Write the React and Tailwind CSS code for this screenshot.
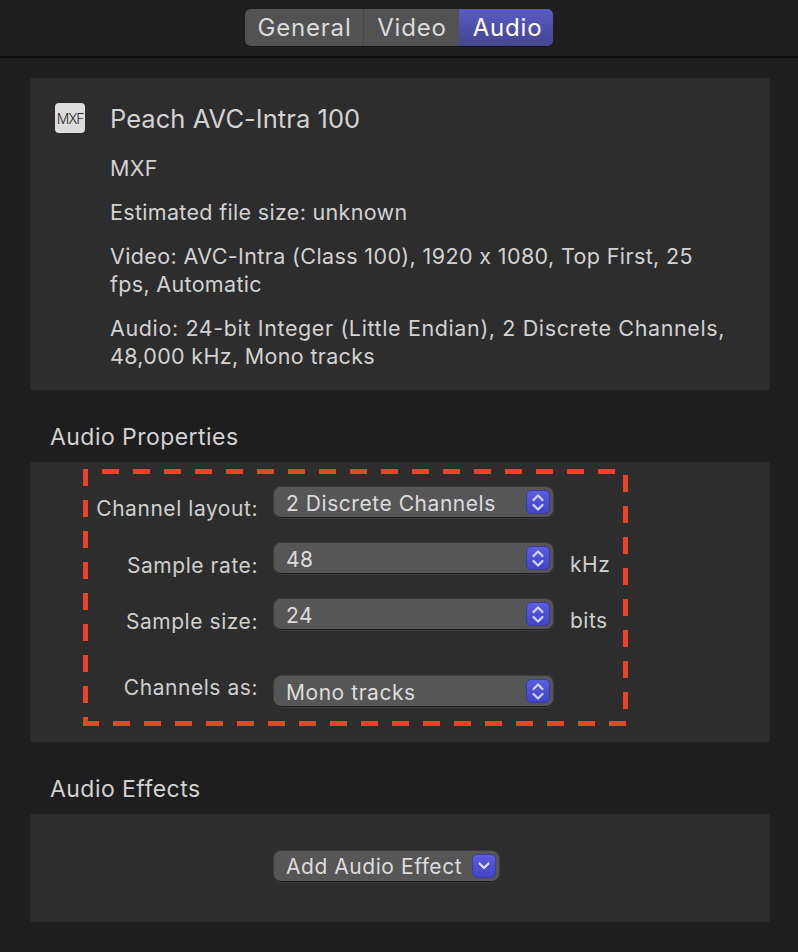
import React from 'react'

const font = { fontFamily: 'Inter, "Noto Sans", sans-serif', fontFeatureSettings: '"calt" 0' }

function StepperIcon() {
  return (
    <span className="w-[24px] h-[24px] rounded-[5px] border border-[#3b3ba0] bg-gradient-to-b from-[#5c5ce2] to-[#4343c4] flex items-center justify-center">
      <svg width="14" height="19" viewBox="0 0 14 19" fill="none" stroke="#d5d5f5" strokeWidth="2.2" strokeLinecap="round" strokeLinejoin="round">
        <path d="M2.5 7 7 2.5 11.5 7" />
        <path d="M2.5 12 7 16.5 11.5 12" />
      </svg>
    </span>
  )
}

function ChevronIcon() {
  return (
    <span className="w-[24px] h-[24px] rounded-[5px] border border-[#3b3ba0] bg-gradient-to-b from-[#5c5ce2] to-[#4343c4] flex items-center justify-center">
      <svg width="14" height="10" viewBox="0 0 14 10" fill="none" stroke="#e0e0f8" strokeWidth="2.2" strokeLinecap="round" strokeLinejoin="round">
        <path d="M2.5 2.5 7 7 11.5 2.5" />
      </svg>
    </span>
  )
}

function Popup({ label, className = 'w-[279px]', textClass = 'pt-[3px]', icon = <StepperIcon /> }) {
  return (
    <div className={`${className} h-[31px] rounded-[7px] bg-[#565656] border-b border-[#1c1c1c] shadow-[0_0_0_1px_#3c3c3c] flex items-center justify-between pl-[12px] pr-[3px]`}>
      <span className={`text-[21px] leading-none text-[#dcdcdc] tracking-[0.55px] ${textClass}`}>{label}</span>
      {icon}
    </div>
  )
}

function Row({ label, value, unit, labelClass = 'translate-y-[7px]', className = '' }) {
  return (
    <div className={`h-[31px] flex items-center ${className}`}>
      <span className={`w-[197px] text-right text-[21px] leading-none text-[#cfcfcf] tracking-[0.55px] mr-[17px] ${labelClass}`}>
        <span className="-mr-[1px]">{label}</span>
      </span>
      <Popup label={value} />
      {unit && <span className="ml-[17px] translate-y-[6px] text-[21px] leading-none text-[#cfcfcf] tracking-[0.5px]">{unit}</span>}
    </div>
  )
}

export default function App() {
  return (
    <div className="w-[798px] h-[952px] bg-[#1e1e1e] overflow-hidden" style={font}>
      {/* Tabs */}
      <div className="h-[58px] border-b-2 border-[#0b0b0b] flex justify-center pt-[9px]">
        <div className="h-[38px] w-[308px] flex rounded-[6px] overflow-hidden bg-[#525252] border-b border-[#161616] text-[24px] tracking-[0.8px] text-[#dadada]">
          <div className="w-[119px] pl-[1px] flex items-center justify-center border-r border-[#464646]">General</div>
          <div className="w-[95px] pl-[1px] flex items-center justify-center">Video</div>
          <div className="flex-1 pl-[3px] flex items-center justify-center bg-gradient-to-b from-[#5a5ac6] to-[#45458f] text-white">Audio</div>
        </div>
      </div>

      <div className="pl-[30px] pr-[28px]">
        {/* Summary */}
        <div className="mt-[20px] h-[312px] bg-[#2d2d2d] rounded-[3px] flex text-[#d2d2d2]">
          <div className="w-[80px] pl-[25px] pt-[25px] shrink-0">
            <div className="w-[30px] h-[30px] rounded-[4px] bg-[#dcdcdc] flex items-center justify-center text-[14px] font-light tracking-[-1.2px] text-[#2a2a2a]">MXF</div>
          </div>
          <div className="pt-[25px] text-[21.5px] leading-[28px] tracking-[0.32px]">
            <div className="text-[25.5px] leading-[32px] tracking-[0.05px]">Peach AVC-Intra 100</div>
            <div className="mt-[19px]">MXF</div>
            <div className="mt-[16px]">Estimated file size: unknown</div>
            <div className="mt-[16px] w-[620px]">
              <span className="tracking-[0.38px]">Video: AVC-Intra (Class 100), 1920 x 1080, Top First, 25</span> fps, Automatic
            </div>
            <div className="mt-[16px] w-[620px]">
              <span className="tracking-[0.62px]">Audio: 24-bit Integer (Little Endian), 2 Discrete Channels,</span> 48,000 kHz, Mono tracks
            </div>
          </div>
        </div>

        <div className="mt-[32px] ml-[20px] h-[30px] text-[23px] leading-[30px] tracking-[0.45px] text-[#d2d2d2]">Audio Properties</div>

        {/* Audio properties */}
        <div className="relative mt-[10px] h-[280px] bg-[#2d2d2d] rounded-[3px] pt-[25px] pl-[30px]">
          <div className="flex flex-col">
            <Row label="Channel layout:" value="2 Discrete Channels" labelClass="translate-y-[6px]" />
            <Row label="Sample rate:" value="48" unit="kHz" className="mt-[25px]" />
            <Row label="Sample size:" value="24" unit="bits" className="mt-[25px]" />
            <Row label="Channels as:" value="Mono tracks" labelClass="-translate-y-[4px]" className="mt-[46px]" />
          </div>
          {/* Red annotation */}
          <svg className="absolute left-[53px] top-[7px]" width="545" height="257" viewBox="0 0 545 257" fill="none" stroke="#e8442a" strokeWidth="5">
            <path d="M19 2.5H532" strokeDasharray="17 14" />
            <path d="M542.5 6V240" strokeDasharray="17 14" />
            <path d="M2.5 0V257" strokeDasharray="17 14" />
            <path d="M0 254.5H16" />
            <path d="M30 254.5H543" strokeDasharray="17 14" />
          </svg>
        </div>

        <div className="mt-[32px] ml-[20px] h-[30px] text-[23px] leading-[30px] tracking-[0.45px] text-[#d2d2d2]">Audio Effects</div>

        {/* Audio effects */}
        <div className="mt-[10px] h-[108px] bg-[#2d2d2d] rounded-[3px] pt-[37px] pl-[244px]">
          <Popup label="Add Audio Effect" className="w-[225px]" textClass="pt-[1px]" icon={<ChevronIcon />} />
        </div>
      </div>
    </div>
  )
}
